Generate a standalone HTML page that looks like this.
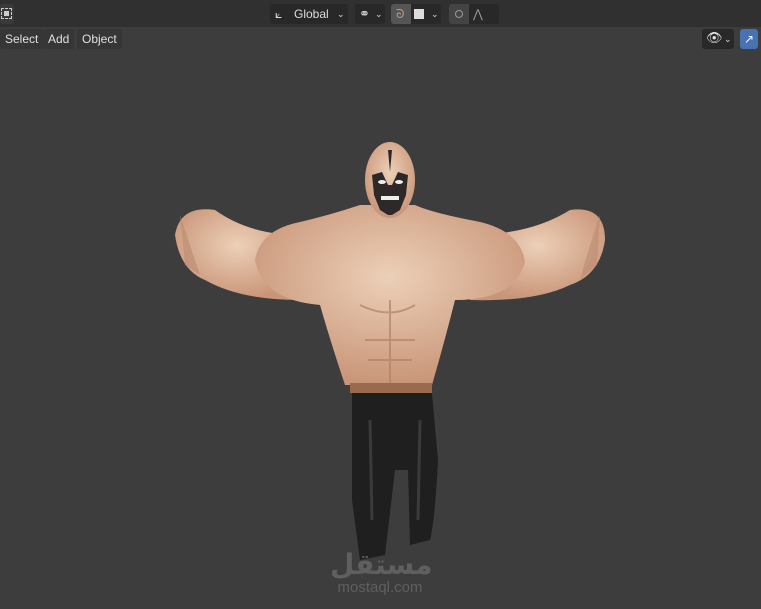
<!DOCTYPE html>
<html><head><meta charset="utf-8"><style>
html,body{margin:0;padding:0;width:761px;height:609px;overflow:hidden;background:#3d3d3d;font-family:"Liberation Sans",sans-serif}
.top{position:absolute;left:0;top:0;width:761px;height:27px;background:#303030}
.btn{position:absolute;background:#282828;border-radius:3px;color:#ddd;font-size:12px;line-height:20px}
.menu{position:absolute;top:29px;height:20px;line-height:20px;color:#e0e0e0;font-size:12px;background:#363636;border-radius:3px;padding:0 5px}
</style></head><body>
<div class="top"></div>
<div class="btn" style="left:0;top:4px;width:14px;height:20px;background:#3a3a3a"></div>
<div style="position:absolute;left:1px;top:8px;width:9px;height:9px;border:1px dashed #ccc"></div>
<div style="position:absolute;left:4px;top:11px;width:5px;height:5px;background:#ccc"></div>
<div class="btn" style="left:270px;top:4px;width:78px;height:20px"><span style="position:absolute;left:5px;top:0;color:#ddd">⟀</span><span style="position:absolute;left:24px">Global</span><span style="position:absolute;left:67px;font-size:9px">⌄</span></div>
<div class="btn" style="left:355px;top:4px;width:30px;height:20px"><span style="position:absolute;left:4px;font-size:13px">⚭</span><span style="position:absolute;left:20px;font-size:9px">⌄</span></div>
<div class="btn" style="left:391px;top:4px;width:50px;height:20px"><div style="position:absolute;left:0;top:0;width:20px;height:20px;background:#555;border-radius:3px 0 0 3px"></div><span style="position:absolute;left:5px;color:#c89a7a">ᘐ</span><div style="position:absolute;left:23px;top:5px;width:10px;height:10px;background:#ddd"></div><span style="position:absolute;left:40px;font-size:9px">⌄</span></div>
<div class="btn" style="left:449px;top:4px;width:50px;height:20px"><div style="position:absolute;left:0;top:0;width:20px;height:20px;background:#444;border-radius:3px 0 0 3px"></div><div style="position:absolute;left:6px;top:6px;width:6px;height:6px;border:1px solid #999;border-radius:50%"></div><span style="position:absolute;left:24px;color:#999">⋀</span></div>
<div class="menu" style="left:0">Select</div>
<div class="menu" style="left:43px">Add</div>
<div class="menu" style="left:77px">Object</div>
<div class="btn" style="left:702px;top:29px;width:32px;height:20px"><span style="position:absolute;left:4px;top:-1px;font-size:13px">👁</span><span style="position:absolute;left:22px;font-size:9px">⌄</span></div>
<div style="position:absolute;left:740px;top:29px;width:18px;height:20px;background:#4772b3;border-radius:3px;color:#fff;font-size:12px;text-align:center;line-height:20px">↗</div>
<svg style="position:absolute;left:0;top:0" width="761" height="609">
<defs><radialGradient id="sk" cx="50%" cy="40%" r="60%"><stop offset="0" stop-color="#ecd0b8"/><stop offset="1" stop-color="#c99578"/></radialGradient></defs>
<path d="M300 235 Q250 235 215 210 Q180 205 175 235 Q180 270 205 280 Q240 300 300 300 Z" fill="url(#sk)"/>
<path d="M470 235 Q530 235 570 210 Q605 205 605 240 Q600 275 570 285 Q535 302 470 300 Z" fill="url(#sk)"/>
<path d="M180 215 Q195 260 200 275 L185 265 Z" fill="#b98a70" opacity=".6"/>
<path d="M600 215 Q585 260 580 280 L597 265 Z" fill="#b98a70" opacity=".6"/>
<path d="M360 205 Q330 215 300 222 Q260 230 255 260 Q262 300 320 305 Q330 340 345 385 L432 385 Q445 340 455 300 Q515 300 525 262 Q520 228 470 220 Q430 212 415 205 Z" fill="url(#sk)"/>
<path d="M360 305 Q390 320 415 305 M365 340 L415 340 M368 360 L412 360 M390 300 L390 385" stroke="#b08068" stroke-width="2" fill="none" opacity=".7"/>
<ellipse cx="390" cy="180" rx="25" ry="38" fill="url(#sk)"/>
<path d="M372 175 L382 172 L388 185 L392 185 L398 172 L408 175 L406 195 L400 210 L392 215 L388 215 L380 210 L374 195 Z" fill="#2e2828"/>
<path d="M388 150 L390 172 L392 150 Z" fill="#2e2828"/>
<rect x="381" y="196" width="18" height="4" fill="#eee"/>
<ellipse cx="382" cy="182" rx="4" ry="2" fill="#eee"/><ellipse cx="399" cy="182" rx="4" ry="2" fill="#eee"/>
<rect x="350" y="383" width="82" height="10" fill="#9a6a4e"/>
<path d="M352 393 L432 393 L438 460 Q435 520 430 540 L410 545 L408 470 L395 470 L385 555 L360 560 L352 500 Z" fill="#1f1f1f"/>
<path d="M370 420 L372 520 M420 420 L418 520" stroke="#3a3a3a" stroke-width="3" fill="none"/>
</svg>
<div style="position:absolute;left:330px;top:548px;width:100px;text-align:center;color:#5f5f5f;font-family:'Liberation Sans','DejaVu Sans',sans-serif;font-weight:bold;font-size:28px;line-height:34px">مستقل</div>
<div style="position:absolute;left:320px;top:579px;width:120px;text-align:center;color:#5f5f5f;font-size:15px">mostaql.com</div>
</body></html>
